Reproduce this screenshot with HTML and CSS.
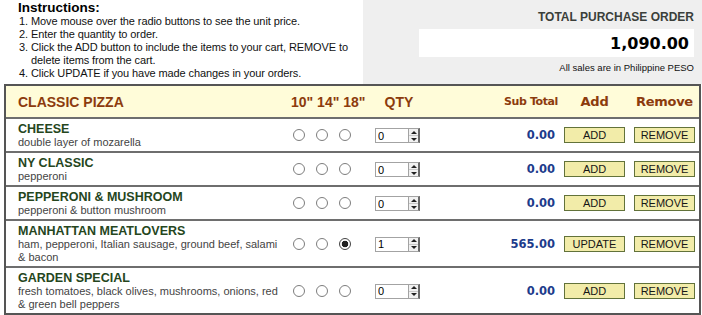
FILE: index.html
```html
<!DOCTYPE html>
<html>
<head>
<meta charset="utf-8">
<title>Classic Pizza Order</title>
<link rel="stylesheet" href="styles.css">
</head>
<body>
<div class="top">
  <div class="instructions">
    <h2 class="instr-title">Instructions:</h2>
    <ol class="instr-list">
      <li>Move mouse over the radio buttons to see the unit price.</li>
      <li>Enter the quantity to order.</li>
      <li>Click the ADD button to include the items to your cart, REMOVE to delete items from the cart.</li>
      <li>Click UPDATE if you have made changes in your orders.</li>
    </ol>
  </div>
  <div class="summary">
    <div class="summary-title">TOTAL PURCHASE ORDER</div>
    <div class="summary-total">1,090.00</div>
    <div class="summary-note">All sales are in Philippine PESO</div>
  </div>
</div>

<table class="menu">
  <colgroup>
    <col class="w-name"><col class="w-size"><col class="w-qty"><col class="w-sub"><col class="w-add"><col class="w-rem">
  </colgroup>
  <thead>
    <tr>
      <th class="h-name">CLASSIC PIZZA</th>
      <th class="h-size">10" 14" 18"</th>
      <th class="h-qty">QTY</th>
      <th class="h-sub">Sub Total</th>
      <th class="h-add">Add</th>
      <th class="h-rem">Remove</th>
    </tr>
  </thead>
  <tbody>
    <tr>
      <td class="c-name"><div class="item">CHEESE</div><div class="desc">double layer of mozarella</div></td>
      <td class="c-size"><span class="sizes"><input class="radio" type="radio" name="p1"><input class="radio" type="radio" name="p1"><input class="radio" type="radio" name="p1"></span></td>
      <td class="c-qty"><span class="qty"><input class="qty-field" type="text" value="0"><span class="spin"><span class="arr up"></span><span class="arr dn"></span></span></span></td>
      <td class="c-sub">0.00</td>
      <td class="c-add"><button class="btn">ADD</button></td>
      <td class="c-rem"><button class="btn btn-rem">REMOVE</button></td>
    </tr>
    <tr>
      <td class="c-name"><div class="item">NY CLASSIC</div><div class="desc">pepperoni</div></td>
      <td class="c-size"><span class="sizes"><input class="radio" type="radio" name="p2"><input class="radio" type="radio" name="p2"><input class="radio" type="radio" name="p2"></span></td>
      <td class="c-qty"><span class="qty"><input class="qty-field" type="text" value="0"><span class="spin"><span class="arr up"></span><span class="arr dn"></span></span></span></td>
      <td class="c-sub">0.00</td>
      <td class="c-add"><button class="btn">ADD</button></td>
      <td class="c-rem"><button class="btn btn-rem">REMOVE</button></td>
    </tr>
    <tr>
      <td class="c-name"><div class="item">PEPPERONI &amp; MUSHROOM</div><div class="desc">pepperoni &amp; button mushroom</div></td>
      <td class="c-size"><span class="sizes"><input class="radio" type="radio" name="p3"><input class="radio" type="radio" name="p3"><input class="radio" type="radio" name="p3"></span></td>
      <td class="c-qty"><span class="qty"><input class="qty-field" type="text" value="0"><span class="spin"><span class="arr up"></span><span class="arr dn"></span></span></span></td>
      <td class="c-sub">0.00</td>
      <td class="c-add"><button class="btn">ADD</button></td>
      <td class="c-rem"><button class="btn btn-rem">REMOVE</button></td>
    </tr>
    <tr>
      <td class="c-name"><div class="item">MANHATTAN MEATLOVERS</div><div class="desc">ham, pepperoni, Italian sausage, ground beef, salami &amp; bacon</div></td>
      <td class="c-size"><span class="sizes"><input class="radio" type="radio" name="p4"><input class="radio" type="radio" name="p4"><input class="radio" type="radio" name="p4" checked></span></td>
      <td class="c-qty"><span class="qty"><input class="qty-field" type="text" value="1"><span class="spin"><span class="arr up"></span><span class="arr dn"></span></span></span></td>
      <td class="c-sub">565.00</td>
      <td class="c-add"><button class="btn">UPDATE</button></td>
      <td class="c-rem"><button class="btn btn-rem">REMOVE</button></td>
    </tr>
    <tr>
      <td class="c-name"><div class="item">GARDEN SPECIAL</div><div class="desc">fresh tomatoes, black olives, mushrooms, onions, red &amp; green bell peppers</div></td>
      <td class="c-size"><span class="sizes"><input class="radio" type="radio" name="p5"><input class="radio" type="radio" name="p5"><input class="radio" type="radio" name="p5"></span></td>
      <td class="c-qty"><span class="qty"><input class="qty-field" type="text" value="0"><span class="spin"><span class="arr up"></span><span class="arr dn"></span></span></span></td>
      <td class="c-sub">0.00</td>
      <td class="c-add"><button class="btn">ADD</button></td>
      <td class="c-rem"><button class="btn btn-rem">REMOVE</button></td>
    </tr>
  </tbody>
</table>
</body>
</html>
```

FILE: styles.css
```css
html, body {
  margin: 0;
  padding: 0;
  background: #ffffff;
}

body {
  font-family: "Liberation Sans", Arial, sans-serif;
  color: #000;
}

/* ---------- top area ---------- */
.top {
  display: flex;
  height: 84px;
}

.instructions {
  width: 363px;
  flex: none;
}

.instr-title {
  margin: 0 0 0 18px;
  font-size: 13.5px;
  line-height: 15px;
  font-weight: bold;
}

.instr-list {
  margin: 0;
  padding-left: 31px;
  font-size: 11px;
  letter-spacing: -0.1px;
  line-height: 13px;
  color: #111;
}

.summary {
  flex: 1;
  background: #efefef;
  padding: 10px 8px 0 56px;
  text-align: right;
}

.summary-title {
  font-size: 12px;
  line-height: 14px;
  font-weight: bold;
  color: #3b3f3b;
}

.summary-total {
  margin-top: 5px;
  height: 28px;
  background: #fff;
  font-family: "DejaVu Sans", Verdana, sans-serif;
  font-weight: bold;
  font-size: 16px;
  line-height: 29px;
  padding-right: 5px;
  color: #000;
}

.summary-note {
  margin-top: 6px;
  font-size: 9.5px;
  line-height: 10px;
  color: #111;
}

/* ---------- menu table ---------- */
.menu {
  margin-left: 4px;
  width: 697px;
  table-layout: fixed;
  border-collapse: separate;
  border-spacing: 0;
  border: 2px solid #555;
}

.w-name { width: 279px; }
.w-size { width: 83px; }
.w-qty  { width: 62px; }
.w-sub  { width: 129px; }
.w-add  { width: 71px; }
.w-rem  { width: 69px; }

.menu thead th {
  background: #fffcd9;
  color: #8c3b0d;
  font-weight: bold;
  height: 31px;
  padding: 0;
  vertical-align: middle;
}

.menu thead th.h-name {
  text-align: left;
  padding-left: 12px;
  font-size: 14px;
}

.menu thead th.h-size {
  text-align: left;
  padding-left: 6px;
  font-size: 14px;
  white-space: nowrap;
}

.menu thead th.h-qty {
  text-align: center;
  font-size: 14px;
}

.menu thead th.h-sub {
  text-align: right;
  padding-right: 1px;
  font-family: "DejaVu Sans", Verdana, sans-serif;
  font-size: 11px;
  letter-spacing: -0.4px;
}

.menu thead th.h-add,
.menu thead th.h-rem {
  text-align: center;
  font-family: "DejaVu Sans", Verdana, sans-serif;
  font-size: 13px;
  letter-spacing: -0.3px;
}

.menu tbody td {
  border-top: 2px solid #6e6e6e;
  vertical-align: middle;
  padding: 0;
}

.menu tbody td.c-name {
  padding: 3px 2px 2px 12px;
}

.item {
  font-size: 12.5px;
  line-height: 14px;
  font-weight: bold;
  color: #25461d;
}

.desc {
  font-size: 11px;
  line-height: 13px;
  color: #444;
}

.menu tbody td.c-size {
  padding-left: 8px;
}

.sizes {
  display: flex;
  gap: 11px;
  align-items: center;
}

.radio {
  -webkit-appearance: none;
  appearance: none;
  margin: 0;
  width: 12px;
  height: 12px;
  border: 1px solid #7d7d7d;
  border-radius: 50%;
  background: #fff;
  flex: none;
}

.radio:checked {
  border-color: #444;
  background: radial-gradient(circle, #222 0, #222 3px, #fff 3.6px);
}

.menu tbody td.c-qty {
  padding-left: 7px;
}

.qty {
  display: inline-flex;
  vertical-align: middle;
  height: 15px;
}

.qty-field {
  box-sizing: border-box;
  width: 33px;
  height: 15px;
  margin: 0;
  padding: 0 0 0 2px;
  border: 1px solid #a3a3a3;
  border-right: none;
  font-family: "Liberation Sans", Arial, sans-serif;
  font-size: 11px;
  color: #000;
  background: #fff;
  outline: none;
}

.spin {
  box-sizing: border-box;
  width: 12px;
  height: 15px;
  border: 1px solid #a3a3a3;
  border-right: 2px solid #6a6a6a;
  background: #f1f1f1;
  display: flex;
  flex-direction: column;
}

.arr {
  flex: 1;
  display: flex;
  align-items: center;
  justify-content: center;
}

.arr.up {
  border-bottom: 1px solid #c9c9c9;
}

.arr.up::before {
  content: "";
  border-left: 3px solid transparent;
  border-right: 3px solid transparent;
  border-bottom: 3px solid #222;
}

.arr.dn::before {
  content: "";
  border-left: 3px solid transparent;
  border-right: 3px solid transparent;
  border-top: 3px solid #222;
}

.menu tbody td.c-sub {
  text-align: right;
  padding-right: 4px;
  font-family: "DejaVu Sans", Verdana, sans-serif;
  font-weight: bold;
  font-size: 11.5px;
  color: #1d3b8b;
}

.menu tbody td.c-add {
  padding-left: 5px;
}

.menu tbody td.c-rem {
  padding-left: 4px;
}

.btn {
  box-sizing: border-box;
  width: 61px;
  height: 16px;
  padding: 0;
  margin: 0;
  display: block;
  background: #f2eca9;
  border: 1px solid #62723a;
  font-family: "Liberation Sans Narrow", "Liberation Sans", Arial, sans-serif;
  font-size: 11px;
  line-height: 14px;
  color: #161616;
}
```
